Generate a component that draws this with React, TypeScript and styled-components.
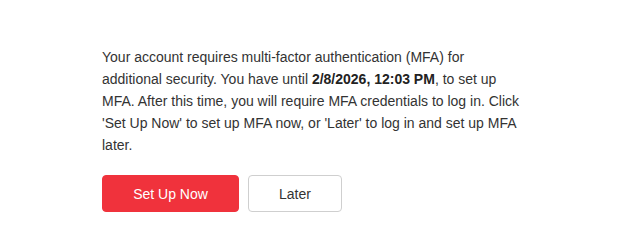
import styled, { createGlobalStyle } from "styled-components";

const GlobalStyle = createGlobalStyle`
  html, body {
    margin: 0;
    padding: 0;
    background: #ffffff;
  }
  body {
    font-family: "Liberation Sans", Arial, Helvetica, sans-serif;
  }
`;

const Page = styled.div`
  width: 630px;
  height: 250px;
  box-sizing: border-box;
  padding: 46px 102px 0 102px;
`;

const Message = styled.p`
  margin: 0;
  max-width: 422px;
  font-size: 14px;
  line-height: 22px;
  color: #333333;

  strong {
    font-weight: bold;
    color: #222222;
  }
`;

const Actions = styled.div`
  display: flex;
  gap: 9px;
  margin-top: 19px;
`;

const Button = styled.button<{ $primary?: boolean }>`
  height: 37px;
  box-sizing: border-box;
  padding: 0;
  width: ${(p) => (p.$primary ? "137px" : "94px")};
  border-radius: 4px;
  font-family: "Liberation Sans", Arial, Helvetica, sans-serif;
  font-size: 14px;
  cursor: pointer;
  border: 1px solid ${(p) => (p.$primary ? "#f0323c" : "#cfcfcf")};
  background: ${(p) => (p.$primary ? "#f0323c" : "#ffffff")};
  color: ${(p) => (p.$primary ? "#ffffff" : "#333333")};
`;

export default function App() {
  return (
    <>
      <GlobalStyle />
      <Page>
        <Message>
          Your account requires multi-factor authentication (MFA) for
          additional security. You have until <strong>2/8/2026, 12:03 PM</strong>, to
          set up MFA. After this time, you will require MFA credentials to log
          in. Click 'Set Up Now' to set up MFA now, or 'Later' to log in and
          set up MFA later.
        </Message>
        <Actions>
          <Button $primary>Set Up Now</Button>
          <Button>Later</Button>
        </Actions>
      </Page>
    </>
  );
}
